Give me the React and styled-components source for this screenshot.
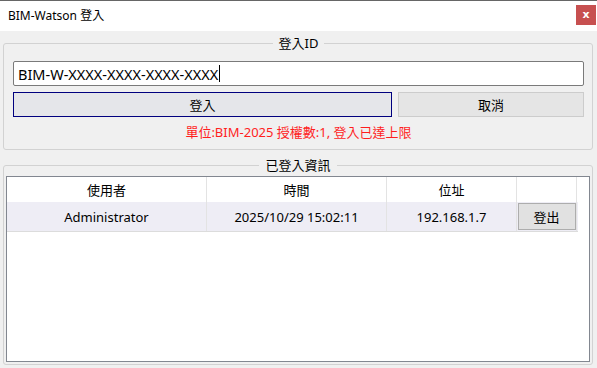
import React from 'react';
import styled, { createGlobalStyle } from 'styled-components';

const GlobalStyle = createGlobalStyle`
  html, body {
    margin: 0;
    padding: 0;
    background: #f0f0f0;
  }
  body {
    font-family: "Segoe UI", "Noto Sans", "Noto Sans CJK TC", sans-serif;
    color: #000;
  }
  * { box-sizing: border-box; }
`;

const Window = styled.div`
  width: 597px;
  height: 368px;
  display: flex;
  flex-direction: column;
  background: #f0f0f0;
  overflow: hidden;
`;

const TitleBar = styled.div`
  height: 31px;
  flex: none;
  display: flex;
  align-items: center;
  justify-content: space-between;
  background: #fff;
  border-top: 1px solid #666;
  padding: 0 1px 2px 8px;
  font-size: 12px;
`;

const CloseButton = styled.div`
  width: 20px;
  height: 20px;
  background: #c75050;
  color: #fff;
  font-size: 11px;
  font-weight: bold;
  display: flex;
  align-items: center;
  justify-content: center;
  line-height: 1;
  padding-bottom: 2px;
  font-family: "DejaVu Sans", sans-serif;
`;

const Body = styled.div`
  flex: 1;
  display: flex;
  flex-direction: column;
  gap: 6px;
  padding: 3px 4px 3px 3px;
`;

const Group = styled.fieldset`
  margin: 0;
  border: 1px solid #d2d2d2;
  border-radius: 3px;
  padding: ${p => p.$pad};
  min-width: 0;
  display: flex;
  flex-direction: column;
  flex: ${p => (p.$grow ? 1 : 'none')};
`;

const Legend = styled.legend`
  margin: 0 auto;
  padding: 0 6px;
  font-size: 13px;
  line-height: 18px;
`;

const TextBox = styled.div`
  height: 25px;
  border: 1px solid #7a7a7a;
  border-radius: 2px;
  background: #fff;
  display: flex;
  align-items: center;
  padding-left: 4px;
  font-size: 14.5px;
`;

const Caret = styled.span`
  display: inline-block;
  width: 1px;
  height: 17px;
  background: #000;
  margin-left: 1px;
`;

const ButtonRow = styled.div`
  display: grid;
  grid-template-columns: 379px 1fr;
  gap: 6px;
  margin-top: 6px;
`;

const Button = styled.div`
  height: 25px;
  display: flex;
  align-items: center;
  justify-content: center;
  font-size: 13px;
  background: ${p => (p.$primary ? '#e5e6ea' : '#e5e5e5')};
  border: 1px solid ${p => (p.$primary ? '#00007f' : '#cccccc')};
`;

const Notice = styled.div`
  margin-top: 6px;
  text-align: center;
  color: #ff1e1e;
  font-size: 13px;
  line-height: 18px;
`;

const ListView = styled.div`
  flex: 1;
  background: #fff;
  border: 1px solid #828790;
`;

const Row = styled.div`
  display: grid;
  grid-template-columns: 200px 180px 130px 60px;
  height: ${p => (p.$header ? '25px' : '30px')};
  background: ${p => (p.$header ? '#fff' : '#eeedf5')};
  border-bottom: ${p => (p.$header ? 'none' : '1px solid #dcdcdc')};
  width: ${p => (p.$header ? 'auto' : '571px')};
`;

const Cell = styled.div`
  display: flex;
  align-items: center;
  justify-content: center;
  font-size: 13px;
  border-right: 1px solid #e3e3e3;
`;

const LogoutButton = styled.div`
  width: 58px;
  height: 27px;
  display: flex;
  align-items: center;
  justify-content: center;
  background: #e1e1e1;
  border: 1px solid #adadad;
  font-size: 13px;
`;

export default function App() {
  return (
    <>
      <GlobalStyle />
      <Window>
        <TitleBar>
          <span>BIM-Watson 登入</span>
          <CloseButton>x</CloseButton>
        </TitleBar>
        <Body>
          <Group $pad="9px 8px 8px 9px">
            <Legend>登入ID</Legend>
            <TextBox>
              BIM-W-XXXX-XXXX-XXXX-XXXX<Caret />
            </TextBox>
            <ButtonRow>
              <Button $primary>登入</Button>
              <Button>取消</Button>
            </ButtonRow>
            <Notice>單位:BIM-2025 授權數:1, 登入已達上限</Notice>
          </Group>
          <Group $grow $pad="2px 2px 2px 2px">
            <Legend>已登入資訊</Legend>
            <ListView>
              <Row $header>
                <Cell>使用者</Cell>
                <Cell>時間</Cell>
                <Cell>位址</Cell>
                <Cell />
              </Row>
              <Row>
                <Cell>Administrator</Cell>
                <Cell>2025/10/29 15:02:11</Cell>
                <Cell>192.168.1.7</Cell>
                <Cell>
                  <LogoutButton>登出</LogoutButton>
                </Cell>
              </Row>
            </ListView>
          </Group>
        </Body>
      </Window>
    </>
  );
}
